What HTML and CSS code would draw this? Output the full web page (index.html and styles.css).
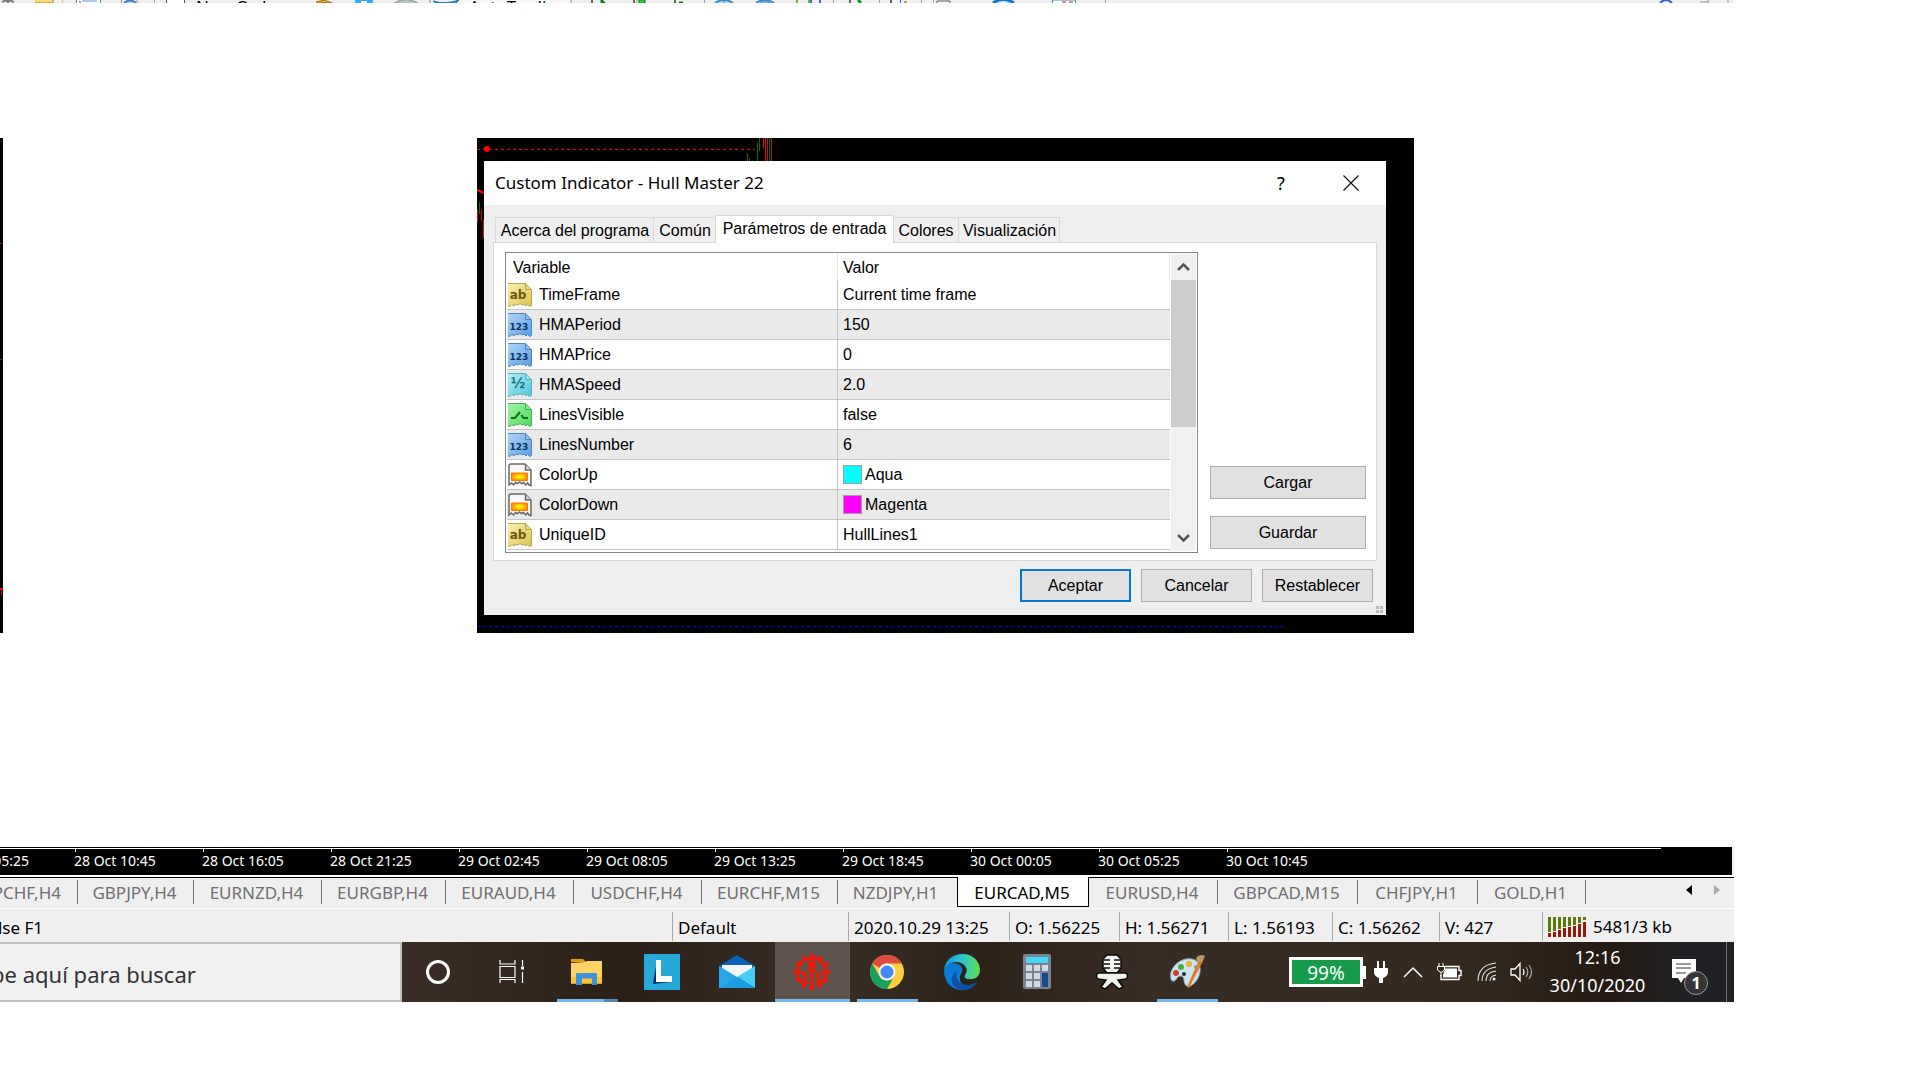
FILE: index.html
```html
<!DOCTYPE html>
<html lang="es">
<head>
<meta charset="utf-8">
<title>Custom Indicator - Hull Master 22</title>
<link rel="stylesheet" href="styles.css">
</head>
<body>
<svg class="defs" width="0" height="0" aria-hidden="true">
  <defs>
    <linearGradient id="gy" x1="0" y1="0" x2="1" y2="1"><stop offset="0" stop-color="#fbf2b4"/><stop offset="1" stop-color="#d9c450"/></linearGradient>
    <linearGradient id="gb" x1="0" y1="0" x2="1" y2="1"><stop offset="0" stop-color="#b2d6f8"/><stop offset="1" stop-color="#5b9ee0"/></linearGradient>
    <linearGradient id="gc" x1="0" y1="0" x2="1" y2="1"><stop offset="0" stop-color="#b4f2f6"/><stop offset="1" stop-color="#52c4d8"/></linearGradient>
    <linearGradient id="gg" x1="0" y1="0" x2="1" y2="1"><stop offset="0" stop-color="#a6f5a8"/><stop offset="1" stop-color="#4fd860"/></linearGradient>
    <radialGradient id="gs"><stop offset="0" stop-color="#ffff20"/><stop offset=".4" stop-color="#ffe000"/><stop offset="1" stop-color="#ff8a00"/></radialGradient>
    <path id="paper" d="M3 .5h14.500l6 6V22.500l-2 1-2-2-1.500 1.500-2-2-2 1-2-1.500-2 1.500-2-1-2 2-2-1.500-2 2-3.500-1V3q0-2.500 2.500-2.500z"/>
    <symbol id="i-ab" viewBox="0 0 24 24"><use href="#paper" fill="url(#gy)" stroke="#b5a548"/><path d="M17.500 1v5.500h6" fill="#eadb83" stroke="#b5a548"/><text x="10" y="16" text-anchor="middle" class="glyph glyph-ab" fill="#675a08">ab</text></symbol>
    <symbol id="i-123" viewBox="0 0 24 24"><use href="#paper" fill="url(#gb)" stroke="#4d86c0"/><path d="M17.500 1v5.500h6" fill="#8abcf0" stroke="#4d86c0"/><text x="11" y="17" text-anchor="middle" class="glyph glyph-num" fill="#0b325f">123</text></symbol>
    <symbol id="i-half" viewBox="0 0 24 24"><use href="#paper" fill="url(#gc)" stroke="#52b4c4"/><path d="M17.500 1v5.500h6" fill="#8ee4ee" stroke="#52b4c4"/><text x="10" y="15" text-anchor="middle" class="glyph glyph-half" fill="#156f80">½</text></symbol>
    <symbol id="i-bool" viewBox="0 0 24 24"><use href="#paper" fill="url(#gg)" stroke="#46ac54"/><path d="M17.500 1v5.500h6" fill="#86ea8c" stroke="#46ac54"/><path d="M3 15h4l5-6M13.500 12l2 3H20" fill="none" stroke="#08721c" stroke-width="2"/></symbol>
    <symbol id="i-color" viewBox="0 0 24 24"><path d="M3 1h14l6 6v15.500l-2-.5-1.500-2-2 2-2-2.500-2 1-2-1.500-2 1.500-2-1-2 2.500-2-2-2.500 2V3q0-2 2-2z" fill="#f8f8f8" stroke="#6a6a6a" stroke-width="1.500"/><path d="M17.500 1.500V7H23" fill="#ddd" stroke="#6a6a6a" stroke-width="1.500"/><path d="M3.500 10h16v7.500h-16z" fill="url(#gs)" stroke="#ff7a00"/></symbol>
  </defs>
</svg>

<header class="toolbar">
  <svg width="1734" height="3" viewBox="0 0 1734 3" aria-hidden="true">
    <path d="M2 2q5-3 12 0M8 0v3" stroke="#777" stroke-width="2" fill="none"/>
    <path d="M35 0h18v3H35z" fill="#f5dc70"/><path d="M53 0v3M35 3h18" stroke="#b08c10"/>
    <path d="M62.500 0v3" stroke="#e8c870"/><path d="M76 0h24v3H76z" fill="#fff"/><path d="M76.500 0v3M100.500 0v3" stroke="#4e86c8"/><path d="M82 1h15" stroke="#5090d8"/><path d="M79 2h2" stroke="red"/>
    <path d="M121.500 0v3M137 0v3M154.500 0v3M637 0v3" stroke="#999"/><path d="M124 3q6-5 12 0" fill="#b8d8f0" stroke="#3c7cc8" stroke-width="2"/>
    <path d="M167 0h18v3h-18z" fill="#fff"/><path d="M166.500 3V0M184.500 0v3" stroke="#555"/>
    <path d="M316 2l8-2 8 3z" fill="#f2c230" stroke="#99700c"/>
    <path d="M355 0h18v3h-18z" fill="#28b0f8"/><path d="M361 1h6v2h-6z" fill="#fff"/>
    <path d="M394 3q12-7 24 0" fill="#b8c4bc" stroke="#8a9490"/>
    <path d="M430 0v3M571 0v3" stroke="#888"/><path d="M433 1q12 4 26-1l-3 3h-20z" fill="#3ca4d0" stroke="#1878a8"/>
    <path d="M461 0h109v3H461z" fill="#f7f7f7"/>
    <path d="M592 0v3M634 0v3M675 0v3" stroke="#666" stroke-width="2"/><path d="M602 0v3h3M679 3h4" stroke="#087c18" stroke-width="3" fill="none"/>
    <path d="M639 0h6v3h-6z" fill="#30e048" stroke="#087c18"/>
    <path d="M704.500 0v3M833.500 0v3M879.500 0v3M921.500 0v3M933.500 0v3M1105.500 0v3" stroke="#999"/>
    <path d="M715 3q9-6 18 0M756 3q9-6 18 0" fill="#b8e0f8" stroke="#3890c8" stroke-width="2"/><path d="M724 0v3M760 2h10" stroke="#3078b0"/>
    <path d="M797 3V0M809 0v3" stroke="#68b838" stroke-width="2"/><path d="M811 3V0M820 0v3" stroke="#3868d0" stroke-width="2"/>
    <path d="M850 0v3M891 0v3" stroke="#666" stroke-width="2"/><path d="M858 0l3 3" stroke="#089828" stroke-width="3"/><path d="M900.500 0v3" stroke="#0878b0"/><path d="M904 2h3" stroke="#d02808"/>
    <path d="M937 3V1h13v2" fill="#fff" stroke="#555"/><path d="M993 3q10-7 21 0" fill="#d8e8f8" stroke="#1878d0" stroke-width="3"/>
    <path d="M1052.500 3V0h23v3" fill="#fff" stroke="#4888d0"/><path d="M1062 2h4M1069 2h4" stroke="#b02010"/>
    <path d="M1660 3q6-6 12 0" fill="#eef" stroke="#3860c0" stroke-width="2"/><path d="M1700 2h9M1708 0v3M1728 0v3" stroke="#999"/>
    <text x="196" y="13">New Order</text><text x="469" y="13">AutoTrading</text>
  </svg>
</header>

<main class="workspace">
  <svg class="sliver" width="3" height="495" viewBox="0 0 3 495" aria-hidden="true"><path d="M0 0h3v495H0z"/><path d="M0 105.500h2M0 221.500h2" stroke="#b01818"/><path d="M0 451h3" stroke="#f00" stroke-width="2"/><path d="M1.500 452v6" stroke="#b01818"/></svg>
  <section class="chart">
    <svg class="chart-art" width="937" height="495" viewBox="0 0 937 495" aria-hidden="true">
      <path d="M0 11.500h278" stroke="#f00" stroke-dasharray="3 3"/><circle cx="10" cy="11" r="3" fill="#f00"/>
      <path d="M270.500 15v8M280.500 5v18M282.500 0v13M292.500 0v23" stroke="#087008"/><path d="M272.500 20v3M286.500 0v10M288.500 0v23M290.500 0v23M294.500 0v23" stroke="#d01010"/>
      <path d="M0 52l7 3" stroke="#f00" stroke-width="2"/><path d="M.5 72v12M4.500 71v12M6.500 82v18" stroke="#d01010"/><path d="M2.500 64v12" stroke="#087008"/>
      <path d="M0 488.500h810" stroke="#00f" stroke-dasharray="3 3"/>
    </svg>
    <div class="dialog" role="dialog" aria-labelledby="dlg-title">
      <div class="titlebar">
        <h1 id="dlg-title">Custom Indicator - Hull Master 22</h1>
        <button class="caption" aria-label="Ayuda">?</button>
        <button class="caption" aria-label="Cerrar"><svg width="16" height="16" viewBox="0 0 16 16"><path d="M.5.5l15 15M15.500.5l-15 15" stroke="#111" stroke-width="1.200"/></svg></button>
      </div>
      <div class="tabs" role="tablist">
        <button class="tab" role="tab">Acerca del programa</button>
        <button class="tab" role="tab">Común</button>
        <button class="tab active" role="tab" aria-selected="true">Parámetros de entrada</button>
        <button class="tab" role="tab">Colores</button>
        <button class="tab last" role="tab">Visualización</button>
      </div>
      <div class="pane">
        <div class="list">
          <table>
            <thead><tr><th>Variable</th><th>Valor</th></tr></thead>
            <tbody>
              <tr><td><svg class="ico"><use href="#i-ab"/></svg>TimeFrame</td><td>Current time frame</td></tr>
              <tr><td><svg class="ico"><use href="#i-123"/></svg>HMAPeriod</td><td>150</td></tr>
              <tr><td><svg class="ico"><use href="#i-123"/></svg>HMAPrice</td><td>0</td></tr>
              <tr><td><svg class="ico"><use href="#i-half"/></svg>HMASpeed</td><td>2.0</td></tr>
              <tr><td><svg class="ico"><use href="#i-bool"/></svg>LinesVisible</td><td>false</td></tr>
              <tr><td><svg class="ico"><use href="#i-123"/></svg>LinesNumber</td><td>6</td></tr>
              <tr><td><svg class="ico"><use href="#i-color"/></svg>ColorUp</td><td><span class="swatch aqua"></span>Aqua</td></tr>
              <tr><td><svg class="ico"><use href="#i-color"/></svg>ColorDown</td><td><span class="swatch magenta"></span>Magenta</td></tr>
              <tr><td><svg class="ico"><use href="#i-ab"/></svg>UniqueID</td><td>HullLines1</td></tr>
            </tbody>
          </table>
          <div class="scrollbar">
            <button aria-label="Subir"><svg width="13" height="10" viewBox="0 0 13 10"><path d="M1 8l5.500-5.500L12 8" fill="none" stroke="#555" stroke-width="2.500"/></svg></button>
            <div class="thumb"></div>
            <button class="down" aria-label="Bajar"><svg width="13" height="10" viewBox="0 0 13 10"><path d="M1 2l5.500 5.500L12 2" fill="none" stroke="#555" stroke-width="2.500"/></svg></button>
          </div>
        </div>
        <div class="side"><button class="btn">Cargar</button><button class="btn">Guardar</button></div>
      </div>
      <div class="actions">
        <button class="btn default">Aceptar</button><button class="btn">Cancelar</button><button class="btn">Restablecer</button>
      </div>
      <svg class="grip" width="7" height="7" viewBox="0 0 7 7" aria-hidden="true"><path d="M0 0h3v3H0zM4 0h3v3H4zM0 4h3v3H0zM4 4h3v3H4z" fill="#bbb"/></svg>
    </div>
  </section>
</main>

<footer class="desktop">
  <div class="timeline">
    <span class="cut">28 Oct 05:25</span><span>28 Oct 10:45</span><span>28 Oct 16:05</span><span>28 Oct 21:25</span><span>29 Oct 02:45</span><span>29 Oct 08:05</span><span>29 Oct 13:25</span><span>29 Oct 18:45</span><span>30 Oct 00:05</span><span>30 Oct 05:25</span><span>30 Oct 10:45</span>
  </div>
  <nav class="charts">
    <a class="cut" href="#">GBPCHF,H4</a><a href="#">GBPJPY,H4</a><a href="#">EURNZD,H4</a><a href="#">EURGBP,H4</a><a href="#">EURAUD,H4</a><a href="#">USDCHF,H4</a><a href="#">EURCHF,M15</a><a href="#" class="before">NZDJPY,H1</a><a href="#" class="current">EURCAD,M5</a><a href="#">EURUSD,H4</a><a href="#">GBPCAD,M15</a><a href="#">CHFJPY,H1</a><a href="#">GOLD,H1</a>
    <div class="arrows"><button aria-label="Anterior"><svg width="6" height="10" viewBox="0 0 6 10"><path d="M6 0v10L0 5z"/></svg></button><button aria-label="Siguiente"><svg width="6" height="10" viewBox="0 0 6 10"><path d="M0 0v10l6-5z" fill="#aaa"/></svg></button></div>
  </nav>
  <div class="status">
    <span class="cut">Para obtener ayuda, pulse F1</span><span></span><span>Default</span><span>2020.10.29 13:25</span><span>O: 1.56225</span><span>H: 1.56271</span><span>L: 1.56193</span><span>C: 1.56262</span><span>V: 427</span>
    <span><svg width="39" height="20" viewBox="0 0 39 20" aria-hidden="true"><path d="M1.500 0v15M6.500 0v14M11.500 0v12M16.500 0v10M21.500 0v9M26.500 0v8M31.500 0v6M36.500 0v3" stroke="#5b7a08" stroke-width="3"/><path d="M1.500 16v4M6.500 15v5M11.500 13v7M16.500 11v9M21.500 10v10M26.500 9v11M31.500 7v13M36.500 5v15" stroke="#981808" stroke-width="3"/></svg>5481/3 kb</span>
  </div>
  <div class="taskbar">
    <label class="search"><input type="text" aria-label="Buscar" value="Escribe aquí para buscar"></label>
    <div class="apps">
      <button aria-label="Cortana"><svg viewBox="0 0 36 36"><circle cx="18" cy="18" r="10.500" fill="none" stroke="#fff" stroke-width="3"/></svg></button>
      <button aria-label="Vista de tareas"><svg viewBox="0 0 36 36"><path d="M6 6v4h15V6M6 12.500h15v11H6zM6 29v-3.500h15V29M28.500 6v6M28.500 18v11" fill="none" stroke="#fff" stroke-width="1.200"/><path d="M27 12.500h3v3h-3z" fill="#fff"/></svg></button>
      <button aria-label="Explorador" class="run multi"><svg viewBox="0 0 36 36"><path d="M2 5h12l3 3H2z" fill="#e49c08"/><path d="M2 9l14-1 2-1h15v22.500H2z" fill="#ffd264"/><path d="M2 23h31v6.500H2z" fill="#ffc430"/><path d="M7 31V20q0-1 1-1h19q1 0 1 1v11h-5v-6.500H13V31z" fill="#3d94dc"/></svg></button>
      <button aria-label="L"><svg viewBox="0 0 36 36"><path d="M0 0h36v36H0z" fill="#26a9d8"/><path d="M13 6L9 30l7-2z" fill="#092c68"/><path d="M9 30l7-4h12v2z" fill="#0d3c80"/><path d="M12 6h5v16h11v6H12z" fill="#fff"/></svg></button>
      <button aria-label="Correo"><svg viewBox="0 0 36 36"><path d="M0 12L18 1l18 11v6H0z" fill="#0863b4"/><path d="M3 11h30v4L18 24 3 15z" fill="#f5f5f8"/><path d="M0 12l18 11v11H0z" fill="#28a7e8"/><path d="M36 12L18 23l18 11z" fill="#43cdf7"/><path d="M0 34l18-11 18 11z" fill="#1c9be6"/></svg></button>
      <button aria-label="Terminal" class="run focus"><svg viewBox="0 0 36 36"><g fill="none" stroke="#ee1708"><path d="M12.500 31A14 14 0 1123.500 31" stroke-width="3"/><circle cx="18" cy="18" r="16.500" stroke-width="3" stroke-dasharray="4.320 4.320" stroke-dashoffset="2.160"/><path d="M18 36V19M12 31V21l-5-3.500M24 31V21l5-3.500M14 15l4 3.500 4-3.500" stroke-width="3"/></g><circle cx="18" cy="10.500" r="4" fill="#ee1708"/></svg></button>
      <button aria-label="Chrome" class="run"><svg viewBox="0 0 36 36"><circle cx="18" cy="18" r="17" fill="#ffcd40"/><path d="M3.300 9.500A17 17 0 0132.700 9.500H18a8.500 8.500 0 00-7.400 4.300z" fill="#dc4b3e"/><path d="M3.300 9.500A17 17 0 0018 35l7.400-12.800A8.500 8.500 0 0110.600 22.200z" fill="#18a05c"/><circle cx="18" cy="18" r="8.500" fill="#f5f5f5"/><circle cx="18" cy="18" r="6.500" fill="#4688f4"/></svg></button>
      <button aria-label="Edge"><svg viewBox="0 0 36 36"><defs><linearGradient id="e1"><stop offset="0" stop-color="#1695d8"/><stop offset=".5" stop-color="#2bc4d0"/><stop offset="1" stop-color="#60df48"/></linearGradient></defs><path d="M0 17C2 9 8 8 14 10c4 2 5 5 4 8-5 7-1 14 7 14 3 0 6-2 8-4-3 5-9 8-15 8C8 36 0 28 0 17z" fill="#0b7bd8"/><path d="M0 17C1-5 35-6 36 16c0 7-6 10-11 9-4 0-5-2-4-4 5-7-2-13-9-13C6 8 1 12 0 17z" fill="url(#e1)"/><path d="M13 17c-3 8 3 14 11 14 5 0 8-3 9-3-5 9-16 10-22 5-6-6-3-13 2-16z" fill="#0c4fa4"/></svg></button>
      <button aria-label="Calculadora"><svg viewBox="0 0 36 36"><rect x="4" width="28" height="35" rx="2" fill="#7b8590"/><path d="M7 3h22v6H7z" fill="#45d7fa"/><path d="M7 11h6v6H7zM15 11h6v6h-6zM23 11h6v6h-6zM7 19h6v6H7zM15 19h6v6h-6zM7 27h6v6H7zM15 27h6v6h-6z" fill="#d5dbe5"/><path d="M23 19h6v14h-6z" fill="#144a8e"/></svg></button>
      <button aria-label="Grabadora"><svg viewBox="0 0 36 36"><g fill="#f3f3ee" stroke="#080808" stroke-width="1.500"><path d="M13 1h10l4 4v9l-4 5H13l-4-5V5z"/><path d="M4 19h28q3 3 0 6l-8 1 5 7-4 2-7-6-7 6-4-2 5-7-8-1q-3-3 0-6z"/></g><path d="M10 6h6M20 6h6M10 10h6M20 10h6M10 14h6M20 14h6" stroke="#111" stroke-width="1.500"/></svg></button>
      <button aria-label="Paint" class="run"><svg viewBox="0 0 36 36"><path d="M2 25C-1 12 15 1 26 6c9 5 5 20-3 25-6 4-8-2-8-5 0-5-5-5-7-2-2 4-5 4-6 1z" fill="#cfe4f3" stroke="#88acc8"/><circle cx="7" cy="19" r="3" fill="#d83c2c"/><circle cx="12" cy="13" r="3" fill="#49ad48"/><circle cx="20" cy="10" r="3" fill="#f1b230"/><circle cx="27" cy="13" r="2" fill="#48a4e0"/><circle cx="15" cy="20" r="2" fill="#25303a"/><path d="M29 8l4 1-13 25-2-1z" fill="#e67c20"/><path d="M27 4q4-5 9-2l-3 7-5-1z" fill="#b99868"/></svg></button>
    </div>
    <div class="tray">
      <div class="battery">99%</div>
      <svg width="14" height="22" viewBox="0 0 14 22"><path d="M3 0h2v7H3zM9 0h2v7H9zM0 7h14v5q-1 4-5 5v5H5v-5q-4-1-5-5z" fill="#fff"/></svg>
      <svg width="20" height="12" viewBox="0 0 20 12"><path d="M1 11l9-9 9 9" fill="none" stroke="#fff" stroke-width="1.500"/></svg>
      <svg width="25" height="18" viewBox="0 0 25 18"><path d="M7 3.500h15v4h2v5h-2v4H4V12" fill="none" stroke="#fff" stroke-width="1.400"/><path d="M8 5.500h12v9H6V12z" fill="#fff"/><path d="M2 0v3M6 0v3M.5 3.500h7V7L4 9.500.5 7zM4 9v4" fill="#30261e" stroke="#fff"/></svg>
      <svg width="20" height="20" viewBox="0 0 20 20"><path d="M1 19Q1 3 19 1M5 19Q5 7 19 5M9 19q0-9 10-10M13 19q0-5 6-6" fill="none" stroke="#ddd" stroke-width="1.100"/><circle cx="17" cy="17" r="1.500" fill="#fff"/></svg>
      <svg width="23" height="20" viewBox="0 0 23 20"><path d="M1 7h4l5-5.500v17L5 13H1zM13 7q2 3 0 6" fill="none" stroke="#fff" stroke-width="1.300"/><path d="M16 5q3.500 5 0 10M19 3q5 7 0 14" fill="none" stroke="#aaa" stroke-width="1.200"/></svg>
      <div class="clock"><span>12:16</span><span>30/10/2020</span></div>
      <button class="notes" aria-label="Notificaciones"><svg width="36" height="37" viewBox="0 0 36 37"><path d="M0 0h24v19H12l-3 5-3-5H0z" fill="#fff"/><path d="M4 5h15M4 9h15M4 14h10" stroke="#333"/><circle cx="24" cy="24" r="11.500" fill="#363535" stroke="#999"/><text x="24" y="30" text-anchor="middle" fill="#fff">1</text></svg></button>
      <div class="peek"></div>
    </div>
  </div>
</footer>
</body>
</html>
```
FILE: styles.css
```css
* { box-sizing: border-box; }
body { margin: 0; background: #fff; color: #000; font-family: "Noto Sans", "Open Sans", sans-serif; font-size: 16px; overflow-x: hidden; }
button { font: inherit; color: inherit; border: 0; background: none; padding: 0; }
svg { display: block; flex: none; }
.defs { position: absolute; }

.toolbar { height: 3px; margin-right: 186px; background: #efefef; overflow: hidden; }
.toolbar text { font-size: 17px; }

.workspace { display: flex; margin-top: 135px; }
.chart { flex: 1; margin: 0 506px 0 474px; padding: 23px 28px 18px 7px; background: #000; position: relative; }
.chart-art { position: absolute; left: 0; top: 0; }

.dialog { position: relative; background: #efefef; padding-bottom: 13px; font-family: "Liberation Sans", Arial, sans-serif; }
.titlebar { display: flex; align-items: center; height: 44px; background: #fff; font-family: "Noto Sans", "Open Sans", sans-serif; }
.titlebar h1 { flex: 1; margin: 0; padding-left: 11px; font-size: 17px; font-weight: 400; line-height: 24px; }
.caption { width: 70px; height: 44px; display: grid; place-items: center; font-size: 18px; }
.tabs { display: grid; grid-template-columns: 158px 62px 179px 64px 102px; align-items: end; height: 37px; margin-left: 11px; }
.tab { height: 25px; border: 1px solid #d9d9d9; border-width: 1px 0 0 1px; padding-left: 1px; white-space: nowrap; line-height: 26px; }
.tab.active { position: relative; height: 28px; margin-bottom: -1px; background: #fff; border-width: 1px 1px 0; padding: 0 0 3px; }
.tab.last { border-right-width: 1px; }
.tab.active + .tab { border-left: 0; padding: 0; }
.pane { display: flex; justify-content: space-between; margin: 0 9px; padding: 9px 10px 7px 11px; border: 1px solid #d9d9d9; background: #fff; }

.list { display: flex; flex: 1; height: 301px; border: 1px solid #828790; padding: 1px; overflow: hidden; }
.list table { flex: 1; height: 296px; border-collapse: separate; border-spacing: 0; table-layout: fixed; }
.list th { height: 26px; padding: 2px 5px 0; text-align: left; font-weight: 400; border-right: 1px solid #e5e5e5; line-height: 24px; }
.list th:first-child { width: 331px; padding-left: 6px; }
.list td { height: 30px; padding: 1px 0 0 5px; line-height: 28px; border-bottom: 1px solid #c3c3c3; }
.list td:first-child { padding-left: 1px; border-right: 1px solid #c3c3c3; }
.list tr:nth-child(even) td { background: #eaeaea; }
.ico { display: inline-block; width: 24px; height: 24px; margin-right: 7px; vertical-align: -7px; }
.glyph { font-family: "DejaVu Sans", sans-serif; font-weight: 700; }
.glyph-ab { font-size: 12px; }
.glyph-num { font-size: 9px; }
.glyph-half { font-size: 14px; }
.swatch { display: inline-block; width: 19px; height: 19px; margin-right: 3px; border: 1px solid #a0a0a0; vertical-align: -4px; }
.aqua { background: #0ff; }
.magenta { background: #f0f; }
.scrollbar { display: flex; flex-direction: column; width: 25px; margin-left: 1px; background: #f0f0f0; }
.scrollbar button { height: 26px; display: grid; place-items: center; }
.scrollbar .thumb { height: 147px; background: #cdcdcd; }
.scrollbar .down { margin-top: auto; }

.side { width: 156px; margin-left: 12px; display: flex; flex-direction: column; justify-content: flex-end; gap: 17px; padding-bottom: 4px; }
.btn { height: 33px; background: #e1e1e1; border: 1px solid #adadad; }
.btn.default { border: 2px solid #0078d7; }
.actions { display: flex; justify-content: flex-end; gap: 10px; margin-top: 8px; padding-right: 13px; }
.actions .btn { width: 111px; }
.grip { position: absolute; right: 3px; bottom: 2px; }

.desktop { margin: 214px 186px 0 0; background: #efefef; }
.timeline { display: grid; grid-template-columns: 74px repeat(10, 128px); height: 28px; margin-right: 2px; background: linear-gradient(#fff, #fff) 0 1px / 1661px 1px no-repeat #000; color: #fff; font-size: 14px; line-height: 20px; overflow: hidden; }
.timeline span { margin-top: 2px; padding-top: 2px; background: linear-gradient(#fff, #fff) 1px 0 / 1px 3px no-repeat; white-space: nowrap; }
.timeline .cut { padding-right: 45px; background: none; }
.cut { display: flex; justify-content: flex-end; white-space: nowrap; overflow: hidden; }

.charts { display: grid; grid-template-columns: 78px 116px 128px 124px 128px 128px 136px 119px 132px 129px 140px 120px 108px 1fr; height: 34px; border-top: 2px solid #fff; border-bottom: 1px solid #fff; background: linear-gradient(#000, #000) 0 0 / 100% 1px no-repeat #efefef; font-size: 17px; }
.charts a { color: #707070; text-decoration: none; text-align: center; line-height: 26px; height: 24px; margin-top: 3px; padding-right: 2px; border-right: 1px solid #707070; white-space: nowrap; }
.charts .cut { padding-right: 16px; }
.charts .before { border-right: 0; padding-right: 4px; }
.charts .current { height: 30px; margin-top: 0; padding-top: 3px; background: #fff; color: #000; border: 1px solid #000; border-top: 0; }
.arrows { display: flex; justify-content: flex-end; gap: 22px; padding: 8px 14px 0 0; align-items: flex-start; }

.status { display: grid; grid-template-columns: 58px 614px 176px 161px 110px 109px 104px 107px 103px 1fr; height: 33px; padding-top: 3px; font-size: 17px; }
.status span { height: 29px; padding-left: 5px; line-height: 31px; border-left: 1px solid #a8a8a8; white-space: nowrap; }
.status span:first-child { padding-right: 15px; border: 0; }
.status span:nth-child(2) { border: 0; }
.status span:last-child { display: flex; align-items: center; gap: 6px; }

.taskbar { display: flex; height: 60px; color: #fff; background: linear-gradient(90deg, #392d25 0, #392d25 24%, #2b2018 36%, #392e26 48%, #2d2219 56%, #382d24 66%, #33291f 85%, #241a13 93%, #202124 97%); }
.search { width: 402px; border: 2px solid #c0c0c0; border-left: 0; background: #f1f1f1; overflow: hidden; }
.search input { width: 400px; height: 56px; margin-left: -57px; padding: 4px 0 0; border: 0; background: none; color: #333; font: 22px "Noto Sans", "Open Sans", sans-serif; }
.apps { display: flex; }
.apps button { display: grid; place-items: center; width: 75px; position: relative; padding-right: 1px; }
.apps button:first-child { width: 73px; padding-right: 2px; }
.apps svg { width: 36px; height: 36px; }
.apps .run::after { content: ""; position: absolute; left: 7px; right: 7px; bottom: 0; height: 3px; background: #76b9ed; }
.apps .multi::after { background: linear-gradient(90deg, #76b9ed 77%, #5586ad 77%); }
.apps .focus { background: #5e544d; }
.apps .focus::after { left: 0; right: 0; }
.tray { display: grid; grid-template-columns: 81px 21px 44px 29px 45px 24px 129px 56px 16px; margin-left: auto; align-items: center; justify-items: center; }
.battery { position: relative; justify-self: start; width: 74px; height: 30px; border: 3px solid #fff; background: #169b4a; text-align: center; font-size: 19px; line-height: 26px; }
.battery::after { content: ""; position: absolute; left: 71px; top: 6px; width: 3px; height: 13px; background: #fff; }
.clock { display: flex; flex-direction: column; text-align: center; font-size: 18px; line-height: 28px; padding-bottom: 2px; }
.notes { margin-top: 11px; }
.notes text { font-size: 16px; font-weight: 700; }
.peek { justify-self: center; width: 1px; height: 60px; background: #777; }
```
